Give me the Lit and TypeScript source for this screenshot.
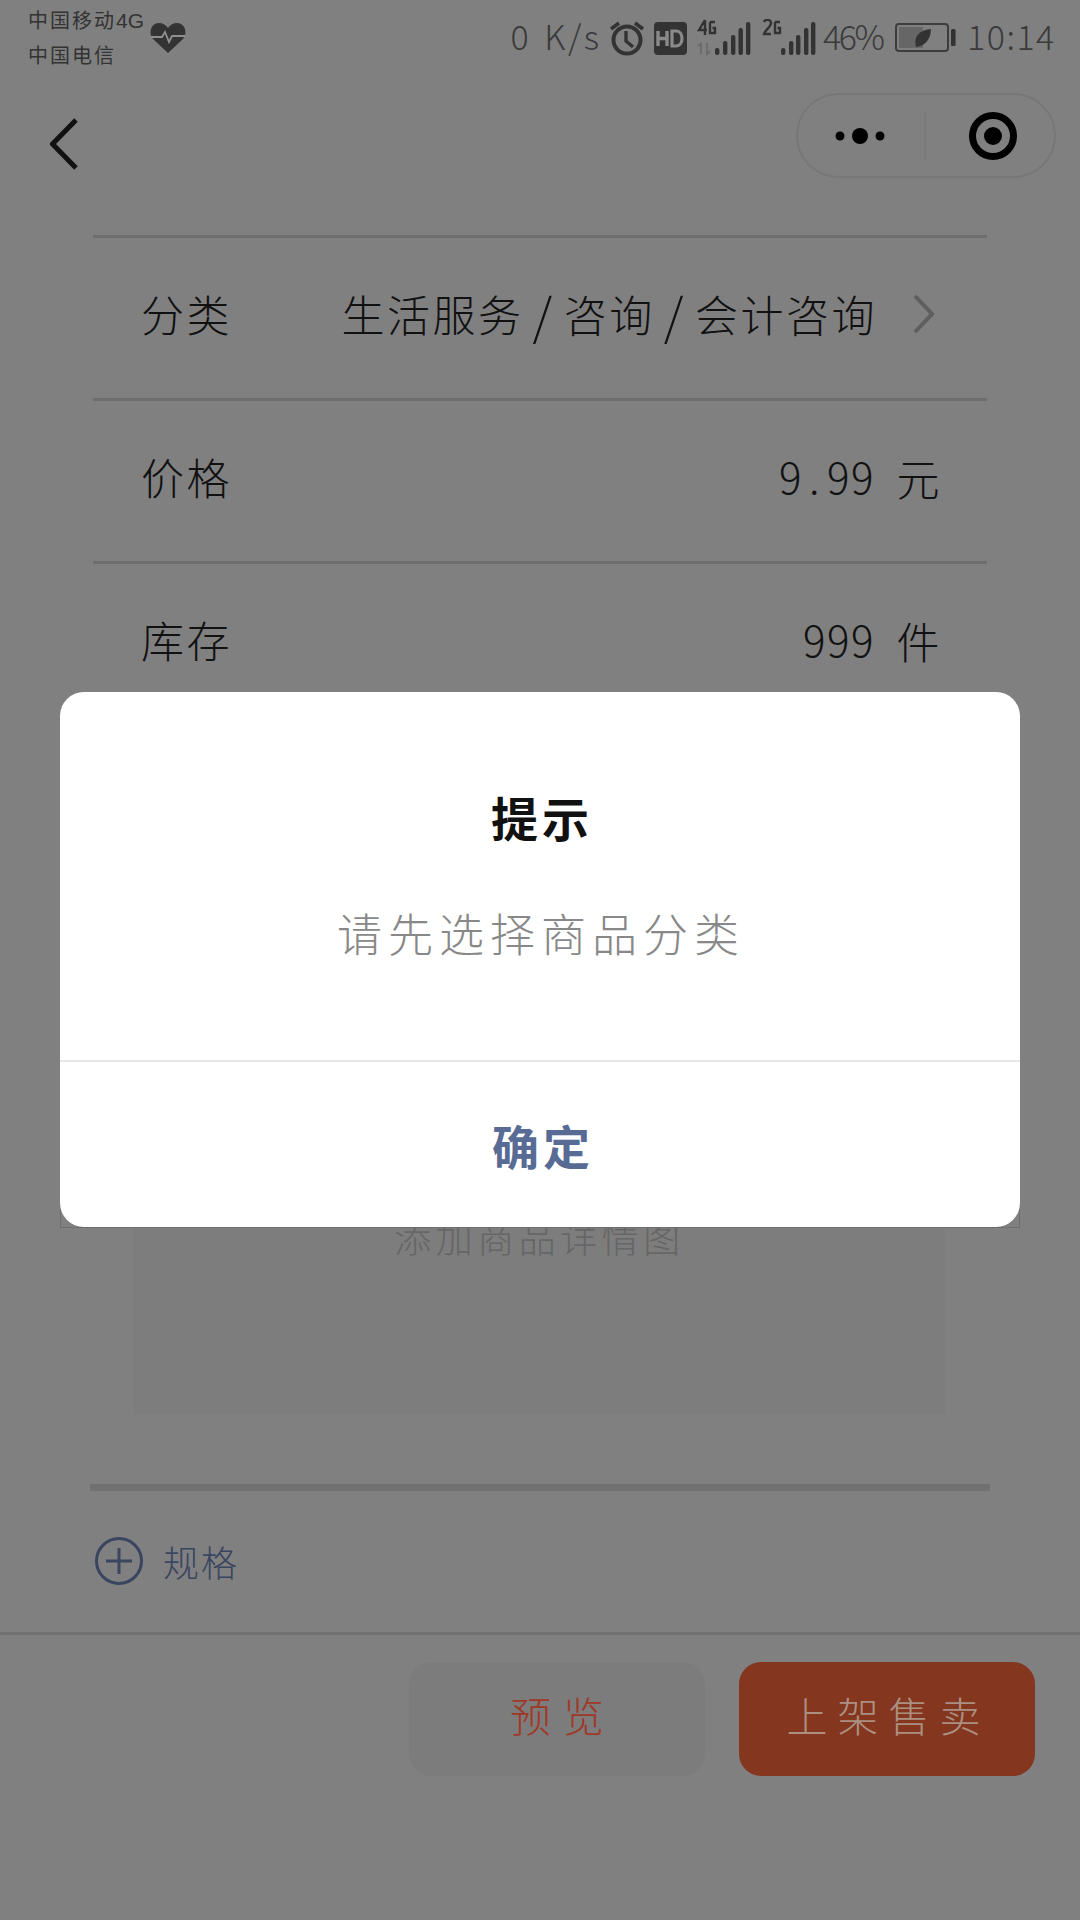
import { LitElement, html, css, svg } from "lit";
import { customElement } from "lit/decorators.js";

const bars = (x: number[]) => {
  const tops = [45, 38, 32, 25, 19];
  return tops.map((t, i) => svg`<rect x=${x[i]} y=${t - 16} width="4.4" height=${52 - t} rx="2" fill="#333"/>`);
};

@customElement("app-root")
export class AppRoot extends LitElement {
  static styles = css`
    :host {
      display: block;
      position: relative;
      width: 1080px;
      height: 1920px;
      overflow: hidden;
      background: #808080;
      color: #111;
      font-family: "Noto Sans CJK SC", "Noto Sans CJK TC", sans-serif;
      font-weight: 300;
    }
    svg { display: block; flex: none; }
    .status {
      height: 73px;
      padding: 3px 0 0 28px;
      display: flex;
      align-items: flex-start;
      color: #333;
    }
    .carrier { font-size: 20px; letter-spacing: 2px; line-height: 34px; width: 122px; white-space: nowrap; font-weight: 400; }
    .carrier b { font-family: "Liberation Sans Narrow", "Liberation Sans", sans-serif; font-weight: 400; letter-spacing: 0; font-size: 21px; }
    .heart { margin-top: 19px; }
    .stat-right { margin-left: auto; display: flex; align-items: center; height: 70px; padding-right: 25px; }
    .mono { font-size: 34px; line-height: 40px; color: #3a3a3a; white-space: pre; padding-bottom: 4px; }
    .speed { width: 98px; letter-spacing: 2.5px; word-spacing: 3px; }
    .pct { letter-spacing: -2.5px; margin: 0 9.5px 0 5px; width: 62px; }
    .clock { margin-left: 11.5px; width: 88px; letter-spacing: 1.5px; }
    .nav {
      height: 159px;
      padding: 17px 24px 0 50px;
      box-sizing: border-box;
      display: flex;
      justify-content: space-between;
      align-items: flex-start;
    }
    .back { margin-top: 25px; }
    .capsule {
      width: 260px;
      height: 85px;
      box-sizing: border-box;
      border: 2px solid #777;
      border-radius: 43px;
    }
    .rows { margin: 0 93px; }
    .row {
      height: 163px;
      box-sizing: border-box;
      border-top: 3px solid #6e6e6e;
      padding: 0 45px 10px 48px;
      display: flex;
      align-items: center;
      justify-content: space-between;
      font-size: 43px;
      letter-spacing: 2.5px;
      white-space: pre;
    }
    .val { display: flex; align-items: center; }
    .slash { font-size: 50px; line-height: 1; vertical-align: -3px; padding: 0 9px; }
    .num { font-size: 42px; letter-spacing: 1.5px; vertical-align: 2px; }
    .dot { padding: 0 6px; }
    .pick { padding-right: 7px; }
    .pick svg { margin-left: 36px; margin-top: 2px; }
    .detail {
      margin: 275px 135px 0 134px;
      height: 415px;
      box-sizing: border-box;
      padding-top: 213px;
      background: #7d7d7d;
      text-align: center;
      font-size: 37px;
      letter-spacing: 4.5px;
      line-height: 50px;
      color: #666;
    }
    .thick { margin: 70px 90px 0; height: 7px; background: #717171; }
    .spec {
      height: 141px;
      box-sizing: border-box;
      padding: 0 0 1px 95px;
      display: flex;
      align-items: center;
      gap: 20px;
      font-size: 36px;
      letter-spacing: 2px;
      color: #3a4560;
    }
    .foot {
      border-top: 3px solid #717171;
      padding: 27px 45px 0 0;
      display: flex;
      justify-content: flex-end;
      gap: 34px;
    }
    .btn {
      width: 296px;
      height: 114px;
      border-radius: 22px;
      display: flex;
      align-items: center;
      justify-content: center;
      font-size: 41px;
      padding-bottom: 11px;
      box-sizing: border-box;
    }
    .ghost { background: #7c7c7c; color: #a03827; letter-spacing: 12px; padding-left: 12px; }
    .solid { background: #84361f; color: #ab9082; letter-spacing: 10px; padding-left: 3px; }
    .frame {
      position: absolute;
      left: 60px;
      top: 692px;
      width: 960px;
      height: 535px;
    }
    .frame::before {
      content: "";
      position: absolute;
      left: 0;
      right: 0;
      bottom: -1px;
      height: 40px;
      box-sizing: border-box;
      border: 1px solid #6e6e6e;
      border-top: 0;
    }
    .modal {
      position: absolute;
      inset: 0;
      background: #fff;
      border-radius: 24px;
      display: flex;
      flex-direction: column;
      text-align: center;
    }
    .body { height: 370px; box-sizing: border-box; padding-top: 95px; border-bottom: 2px solid #e6e6e6; }
    .title { font-size: 47px; font-weight: 700; letter-spacing: 4px; line-height: 60px; color: #111; padding-left: 4px; }
    .msg { font-size: 45px; letter-spacing: 6px; line-height: 60px; margin-top: 56px; color: #888; padding-left: 2px; }
    .ok { flex: 1; display: flex; align-items: center; justify-content: center; font-size: 47px; font-weight: 700; letter-spacing: 4px; color: #576b95; padding-left: 6px; }
  `;

  render() {
    return html`
      <div class="status">
        <div class="carrier">中国移动<b>4G</b><br />中国电信</div>
        <svg class="heart" width="36" height="32" viewBox="0 0 36 32">
          <path fill="#333" d="M18 31 L3 17 C-2 11 1 1 9 1 C13 1 16 3 18 6 C20 3 23 1 27 1 C35 1 38 11 33 17 Z"/>
          <path fill="none" stroke="#8f8f8f" stroke-width="1.8" d="M1 15 H12 L15 10 L19 20 L22 14 H35"/>
        </svg>
        <div class="stat-right">
          <div class="mono speed">0 K/s</div>
          <svg width="36" height="36" viewBox="0 0 36 36">
            <circle cx="18" cy="20" r="13.5" fill="none" stroke="#333" stroke-width="4"/>
            <path d="M17 11 V21 L24 27" fill="none" stroke="#333" stroke-width="3.4"/>
            <path d="M2 9 L10 3 M34 9 L26 3" stroke="#333" stroke-width="3.6"/>
          </svg>
          <svg style="margin-left:9px" width="33" height="33" viewBox="0 0 33 33">
            <rect width="33" height="33" rx="4" fill="#333"/>
            <path d="M4 9 V24 M13 9 V24 M4 16.5 H13" stroke="#8a8a8a" stroke-width="3.4" fill="none"/>
            <path d="M18 9 V24 H22 C30 24 30 9 22 9 Z" stroke="#8a8a8a" stroke-width="3.2" fill="none"/>
          </svg>
          <svg style="margin-left:10px" width="56" height="38" viewBox="0 0 56 38">
            <path d="M8 1 L2 11 H10 M8 1 V16 M13 3 H18 M13 3 V14 H18 V9 H15.5" fill="none" stroke="#333" stroke-width="2.4"/>
            <path d="M4 24 V35 M1 27 L4 24 M10 24 V35 L13 32" fill="none" stroke="#6c6c6c" stroke-width="2"/>
            ${bars([18, 26, 34, 41.5, 49])}
          </svg>
          <svg style="margin-left:9.5px" width="56" height="38" viewBox="0 0 56 38">
            <path d="M2 3 C3 0 9 0 9 4 C9 8 3 11 2 15 H9 M13 3 H18 M13 3 V14 H18 V9 H15.5" fill="none" stroke="#333" stroke-width="2.4"/>
            ${bars([19, 27, 34, 42, 49])}
          </svg>
          <div class="mono pct">46%</div>
          <svg width="61" height="30" viewBox="0 0 61 30">
            <rect x="1" y="1" width="52" height="27" rx="3" fill="none" stroke="#3d3d3d" stroke-width="2"/>
            <rect x="4" y="4" width="24" height="21" fill="#666"/>
            <path d="M21 24 C18 12 26 7 36 6 C36 16 30 23 21 24 Z" fill="#333"/>
            <rect x="56" y="6" width="4.6" height="17" rx="1.5" fill="#333"/>
          </svg>
          <div class="mono clock">10:14</div>
        </div>
      </div>

      <div class="nav">
        <svg class="back" width="28" height="52" viewBox="0 0 28 52">
          <path d="M26 2 L2.5 26 L26 50" fill="none" stroke="#111" stroke-width="5"/>
        </svg>
        <svg class="capsule" viewBox="0 0 256 81">
          <circle cx="42" cy="41" r="4.5" fill="#000"/>
          <circle cx="62" cy="41" r="8" fill="#000"/>
          <circle cx="82" cy="41" r="4.5" fill="#000"/>
          <path d="M127 17 V65" stroke="#747474" stroke-width="1"/>
          <circle cx="195" cy="41" r="20.5" fill="none" stroke="#000" stroke-width="7"/>
          <circle cx="195" cy="41" r="9" fill="#000"/>
        </svg>
      </div>

      <div class="rows">
        <div class="row">
          <span>分类</span>
          <div class="val pick"><span>生活服务<span class="slash">/</span>咨询<span class="slash">/</span>会计咨询</span><svg width="22" height="40" viewBox="0 0 22 40"><path d="M2 2 L19 20 L2 38" fill="none" stroke="#5e5e5e" stroke-width="4"/></svg></div>
        </div>
        <div class="row"><span>价格</span><span><span class="num">9<span class="dot">.</span>99  </span>元</span></div>
        <div class="row"><span>库存</span><span><span class="num">999  </span>件</span></div>
      </div>

      <div class="detail">添加商品详情图</div>
      <div class="thick"></div>
      <div class="spec">
        <svg width="48" height="48" viewBox="0 0 48 48">
          <circle cx="24" cy="24" r="22.5" fill="none" stroke="#3a4560" stroke-width="3"/>
          <path d="M24 11 V37 M11 24 H37" stroke="#3a4560" stroke-width="3"/>
        </svg>
        <span>规格</span>
      </div>
      <div class="foot">
        <div class="btn ghost">预览</div>
        <div class="btn solid">上架售卖</div>
      </div>

      <div class="frame">
        <div class="modal">
          <div class="body">
            <div class="title">提示</div>
            <div class="msg">请先选择商品分类</div>
          </div>
          <div class="ok">确定</div>
        </div>
      </div>
    `;
  }
}
